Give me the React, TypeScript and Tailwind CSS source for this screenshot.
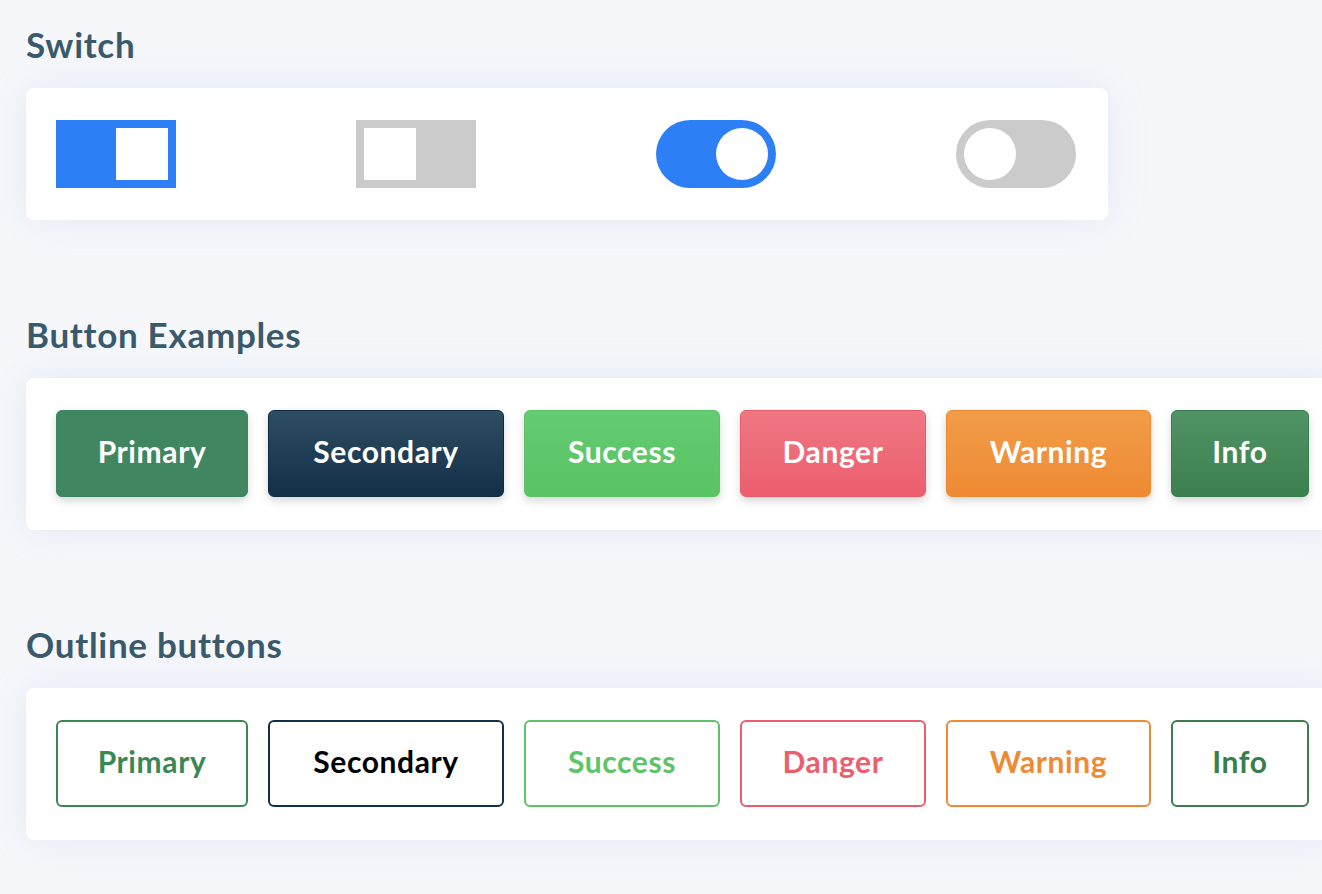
import React from "react";

const font = { fontFamily: "Lato, 'Noto Sans', sans-serif" };

const solid = [
  { label: "Primary", w: "w-[192px]", cls: "bg-[#3f8661] border-[#3c8560]" },
  { label: "Secondary", w: "w-[236px]", cls: "bg-gradient-to-b from-[#2e4e62] to-[#122f48] border-[#0f2b43]" },
  { label: "Success", w: "w-[196px]", cls: "bg-gradient-to-b from-[#64cc72] to-[#59c263] border-[#5ac366]" },
  { label: "Danger", w: "w-[186px]", cls: "bg-gradient-to-b from-[#ef7783] to-[#ec5e6d] border-[#ea5b6a]" },
  { label: "Warning", w: "w-[205px]", cls: "bg-gradient-to-b from-[#f19c48] to-[#ef8a33] border-[#ee8832]" },
  { label: "Info", w: "w-[138px]", cls: "bg-gradient-to-b from-[#509365] to-[#3d804e] border-[#3a7c4b]" },
];

const outline = [
  { label: "Primary", w: "w-[192px]", cls: "border-[#3b8753] text-[#3b8753]" },
  { label: "Secondary", w: "w-[236px]", cls: "border-[#12304a] text-black" },
  { label: "Success", w: "w-[196px]", cls: "border-[#5cc467] text-[#5cc467]" },
  { label: "Danger", w: "w-[186px]", cls: "border-[#eb5e6c] text-[#eb5e6c]" },
  { label: "Warning", w: "w-[205px]", cls: "border-[#ef8a33] text-[#ef8a33]" },
  { label: "Info", w: "w-[138px]", cls: "border-[#3a7f4b] text-[#3a7f4b]" },
];

function Heading({ children }: { children: React.ReactNode }) {
  return (
    <h2 className="pl-[26px] text-[35px] leading-[40px] tracking-[0.02em] font-bold text-[#3a5a6b] mb-[24px]">
      {children}
    </h2>
  );
}

function Card({ className, children }: { className?: string; children: React.ReactNode }) {
  return (
    <div className={`ml-[26px] rounded-[8px] bg-white shadow-[0_0_40px_rgba(140,160,200,0.16)] ${className ?? ""}`}>
      {children}
    </div>
  );
}

export default function App() {
  return (
    <div className="min-h-[894px] w-full overflow-hidden bg-[#f5f7fb] pt-[24px]" style={font}>
      {/* Switch */}
      <Heading>Switch</Heading>
      <Card className="w-[1082px] py-[32px] pl-[30px] flex gap-[180px]">
        <div className="flex h-[68px] w-[120px] justify-end bg-[#2d7ff5] p-[8px]">
          <div className="h-[52px] w-[52px] bg-white" />
        </div>
        <div className="flex h-[68px] w-[120px] justify-start bg-[#cbcbcb] p-[8px]">
          <div className="h-[52px] w-[52px] bg-white" />
        </div>
        <div className="flex h-[68px] w-[120px] justify-end rounded-full bg-[#2d7ff5] p-[8px]">
          <div className="h-[52px] w-[52px] rounded-full bg-white" />
        </div>
        <div className="flex h-[68px] w-[120px] justify-start rounded-full bg-[#cbcbcb] p-[8px]">
          <div className="h-[52px] w-[52px] rounded-full bg-white" />
        </div>
      </Card>

      {/* Button examples */}
      <div className="mt-[94px]">
        <Heading>Button Examples</Heading>
        <Card className="w-max pt-[32px] pb-[33px] px-[30px] flex gap-[20px]">
          {solid.map((b) => (
            <button
              key={b.label}
              className={`${b.w} ${b.cls} h-[87px] rounded-[6px] border pb-[4px] text-[30px] tracking-[0.02em] font-bold text-white shadow-[0_4px_8px_rgba(0,0,0,0.16)]`}
            >
              {b.label}
            </button>
          ))}
        </Card>
      </div>

      {/* Outline buttons */}
      <div className="mt-[94px]">
        <Heading>Outline buttons</Heading>
        <Card className="w-max pt-[32px] pb-[33px] px-[30px] flex gap-[20px]">
          {outline.map((b) => (
            <button
              key={b.label}
              className={`${b.w} ${b.cls} h-[87px] rounded-[6px] border-2 bg-white pb-[4px] text-[30px] tracking-[0.02em] font-bold`}
            >
              {b.label}
            </button>
          ))}
        </Card>
      </div>
    </div>
  );
}
